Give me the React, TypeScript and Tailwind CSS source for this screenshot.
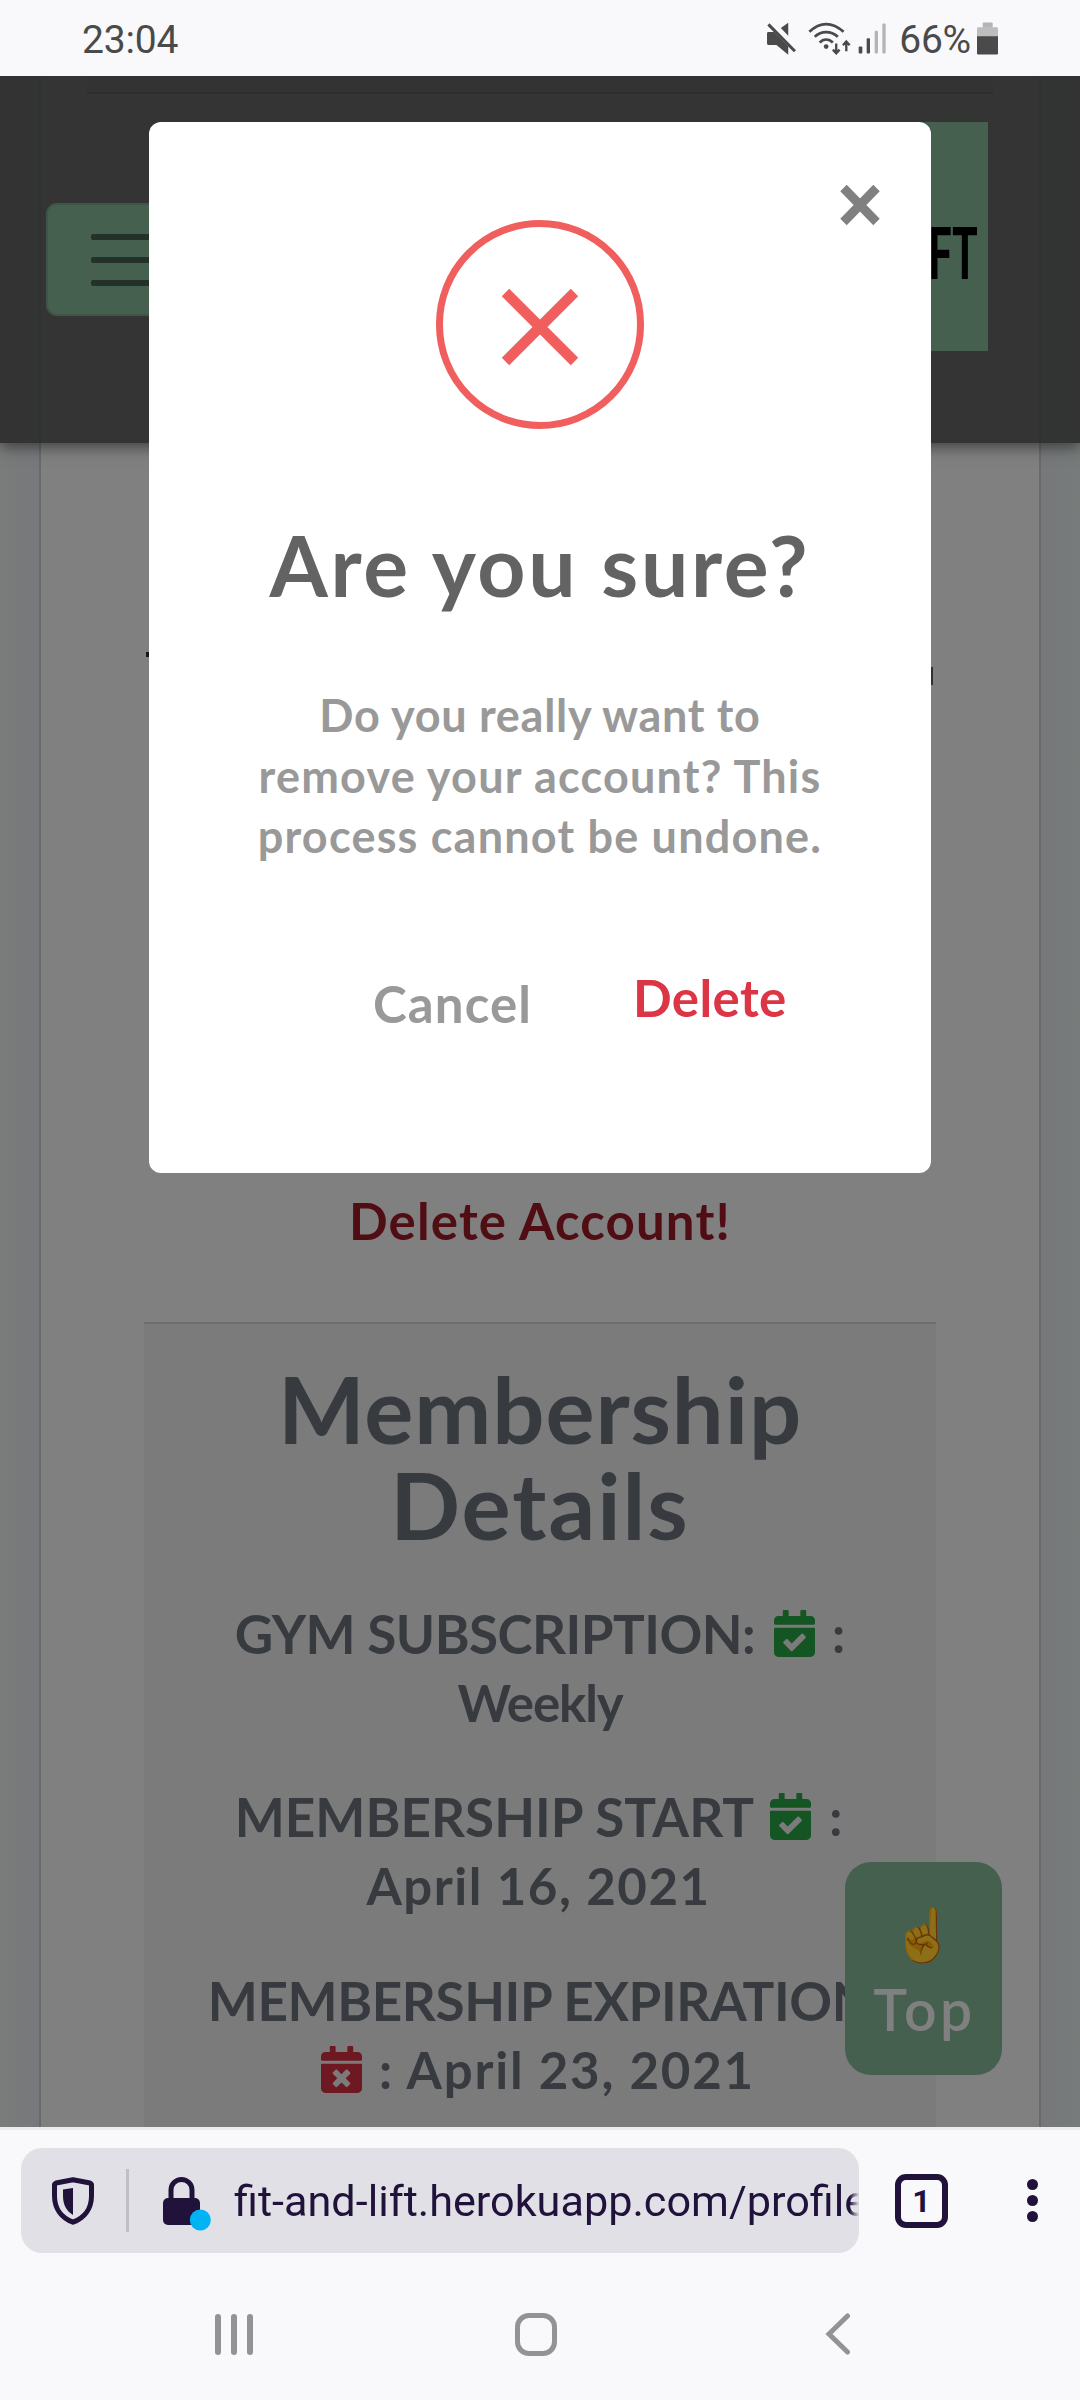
import React from 'react';
import { FaCalendarCheck, FaCalendarTimes } from 'react-icons/fa';

function StatusBar() {
  return (
    <header className="flex h-[76px] shrink-0 items-center justify-between bg-[#f9f9fb] px-[82px] font-['Roboto',sans-serif] text-[39px] leading-[76px] text-[#4a4a4a]">
      <span className="pt-1 tracking-[-0.2px]">23:04</span>
      <div className="flex items-center">
        <svg className="mr-3 h-[33px] w-[29px]" viewBox="20 36 86 98" fill="#4a4a4a">
          <path d="M20 70q0-4 4-4h17l42 42v25L48 104H24q-4 0-4-4zM61 54l22-16v39z" />
          <path d="M24 43l79 80" stroke="#4a4a4a" strokeWidth="9" />
        </svg>
        <svg className="mr-[7px] h-[33px] w-[43px]" viewBox="142 36 128 98" fill="none" stroke="#4a4a4a">
          <path d="M146 65Q170 42 196 42t52 23M162 80Q177 66 196 66t35 14M177 97Q185 88 196 88t20 9" strokeWidth="8" />
          <circle cx="196" cy="109" r="7" fill="#4a4a4a" stroke="none" />
          <path d="M226 100v28M216 118l10 11 10-11M256 123V94M246 105l10-11 10 11" strokeWidth="7" />
        </svg>
        <svg className="mr-[13px] h-[31px] w-[28px]" viewBox="292 42 84 92">
          <rect x="294" y="112" width="11" height="21" rx="3" fill="#4a4a4a" />
          <rect x="318" y="87" width="10" height="46" rx="3" fill="#4a4a4a" />
          <rect x="342" y="65" width="10" height="68" rx="3" fill="#b4b4b4" />
          <rect x="365" y="43" width="10" height="90" rx="3" fill="#b4b4b4" />
        </svg>
        <span className="pt-1 tracking-[-0.2px]">66%</span>
        <svg className="ml-1.5 h-[33px] w-[21px]" viewBox="651 36 63 98">
          <rect x="668" y="37" width="30" height="16" rx="3" fill="#b4b4b4" />
          <rect x="651" y="51" width="63" height="40" rx="4" fill="#bdbdbd" />
          <path d="M651 78h63v51q0 4-4 4h-55q-4 0-4-4z" fill="#4a4a4a" />
        </svg>
      </div>
    </header>
  );
}

function SiteNav() {
  return (
    <nav className="relative z-10 flex h-[367px] items-start justify-between bg-[#2b2b2b]/90 pr-[92px] pl-[46px] shadow-[0_4px_14px_rgba(0,0,0,0.5)]">
      <button className="mt-[127px] flex h-[113px] w-[188px] flex-col items-center justify-center gap-[17px] rounded-[11px] border-2 border-[#3e5648] bg-[#466050]">
        <span className="h-1.5 w-[98px] rounded-xs bg-[#24302a]" />
        <span className="h-1.5 w-[98px] rounded-xs bg-[#24302a]" />
        <span className="h-1.5 w-[98px] rounded-xs bg-[#24302a]" />
      </button>
      <div className="mt-[46px] flex h-[229px] w-[229px] items-center justify-end bg-[#466050] pr-2.5">
        <span className="origin-right scale-x-[0.57] pt-[35px] font-['Roboto',sans-serif] text-[73px] leading-none font-bold text-black">
          LIFT
        </span>
      </div>
    </nav>
  );
}

function MembershipDetails() {
  return (
    <section className="mx-[103px] mt-[71px] h-[820px] border-t-2 border-[#6d6d6d] bg-[#7b7b7b] pt-[37px] text-center text-[51px] leading-[69px] font-bold text-[#373b40]">
      <h2 className="text-[92px] leading-[96px] font-bold">
        <span className="block tracking-[0.9px]">Membership</span>
        <span className="block tracking-[2px]">Details</span>
      </h2>
      <div className="mt-[45.5px]">
        <div className="flex items-center justify-center">
          <span className="text-[53px] tracking-[-0.55px]">GYM SUBSCRIPTION:</span>
          <FaCalendarCheck className="mr-[17px] ml-[19px] h-[47px] w-[41px] text-[#145523]" />
          <span>:</span>
        </div>
        <div className="tracking-[-1.1px]">Weekly</div>
      </div>
      <div className="mt-[45.5px]">
        <div className="flex items-center justify-center pr-[3px]">
          <span className="text-[53px] tracking-[0.05px]">MEMBERSHIP START</span>
          <FaCalendarCheck className="mr-[18px] ml-[16px] h-[47px] w-[41px] text-[#145523]" />
          <span>:</span>
        </div>
        <div className="pr-[3px] tracking-[1.5px]">April 16, 2021</div>
      </div>
      <div className="mt-[45.5px]">
        <div className="text-[53px] tracking-[-0.4px]">MEMBERSHIP EXPIRATION</div>
        <div className="flex items-center justify-center pr-1">
          <FaCalendarTimes className="mr-[17px] h-[47px] w-[41px] text-[#6e1922]" />
          <span className="tracking-[1.8px] whitespace-pre">: April 23, 2021</span>
        </div>
      </div>
    </section>
  );
}

function Modal() {
  return (
    <div className="absolute top-[46px] left-[149px] z-30 flex h-[1051px] w-[782px] flex-col items-center rounded-xl bg-white pt-[98px]">
      <button className="absolute top-[62px] right-[50px]">
        <svg className="size-[42px]" viewBox="0 0 42 42">
          <path d="M4.5 4l33 34M37.5 4l-33 34" stroke="#808080" strokeWidth="9" />
        </svg>
      </button>
      <div className="flex h-[209px] w-[208px] items-center justify-center rounded-full border-[7px] border-[#f15e5e]">
        <svg className="mt-1 h-[78px] w-[78px]" viewBox="0 0 78 78">
          <path d="M4.5 4.5l69 69M73.5 4.5l-69 69" stroke="#f15e5e" strokeWidth="10.5" />
        </svg>
      </div>
      <h1 className="mt-[86px] text-[84px] leading-[100px] font-bold tracking-[2.65px] text-[#636363]">Are you sure?</h1>
      <p className="mt-[70px] text-center text-[45px] leading-[60.5px] font-bold tracking-[1.2px] text-[#999999]">
        <span className="block tracking-[0.7px]">Do you really want to</span>
        <span className="block">remove your account? This</span>
        <span className="block">process cannot be undone.</span>
      </p>
      <div className="mt-[101px] flex w-full items-start pl-[224px] text-[51px] leading-[60px] font-bold">
        <button className="mt-1.5 w-[260px] text-left tracking-[1.1px] text-[#999999]">Cancel</button>
        <button className="tracking-[0.4px] text-[#dc3545]">Delete</button>
      </div>
    </div>
  );
}

function BrowserBar() {
  return (
    <div className="flex h-[144px] items-center border-t-[3px] border-[#ececef] px-[21px]">
      <div className="flex h-[105px] w-[838px] items-center overflow-hidden rounded-[21px] bg-[#e1e0e6] pl-[31px]">
        <svg className="h-[48px] w-[42px] shrink-0" viewBox="0 0 42 48" fill="none">
          <path d="M21 2.8l17 3.2q1.5.5 1.5 2v11c0 13-7.5 22-18.5 26.200C10 41 2.5 32 2.5 19V8q0-1.5 1.5-2z" stroke="#20123a" strokeWidth="5" strokeLinejoin="round" />
          <path d="M21 11v27C14 34 11 27 11 19v-6.5z" fill="#20123a" />
        </svg>
        <span className="ml-8 h-[63px] w-[3px] shrink-0 bg-[#bfbfc9]" />
        <svg className="mt-1.5 ml-[34px] h-[54px] w-[48px] shrink-0" viewBox="0 0 48 54" fill="none">
          <path d="M8 24V13a10.5 10.5 0 0 1 21 0v11" stroke="#20123a" strokeWidth="5" />
          <rect x="0" y="21" width="37" height="27" rx="5" fill="#20123a" />
          <circle cx="37.3" cy="43" r="10.5" fill="#00b3f4" />
        </svg>
        <span className="mt-[3px] ml-[23px] w-[625px] shrink-0 overflow-hidden bg-gradient-to-r from-[#20123a] from-[98.5%] to-[#20123a]/0 bg-clip-text font-['Roboto',sans-serif] text-[43.2px] leading-[60px] whitespace-nowrap text-transparent">
          fit-and-lift.herokuapp.com/profile
        </span>
      </div>
      <div className="ml-9 flex h-[54px] w-[53px] items-center justify-center rounded-[11px] border-[6px] border-[#20123a] font-['Roboto',sans-serif] text-[32px] leading-none font-bold text-[#20123a]">
        1
      </div>
      <div className="ml-[79px] flex flex-col gap-[5px]">
        <span className="size-[11px] rounded-full bg-[#20123a]" />
        <span className="size-[11px] rounded-full bg-[#20123a]" />
        <span className="size-[11px] rounded-full bg-[#20123a]" />
      </div>
    </div>
  );
}

function SystemNav() {
  return (
    <div className="flex h-[126px] items-center pl-[215px]">
      <div className="flex gap-[10px]">
        <span className="h-[41px] w-1.5 rounded-full bg-[#939393]" />
        <span className="h-[41px] w-1.5 rounded-full bg-[#939393]" />
        <span className="h-[41px] w-1.5 rounded-full bg-[#939393]" />
      </div>
      <span className="ml-[262px] h-[43px] w-[42px] rounded-[14px] border-[5px] border-[#939393]" />
      <svg className="ml-[268px] h-[42px] w-[26px]" viewBox="0 0 26 42" fill="none">
        <path d="M22.5 3L4 21l18.5 18" stroke="#939393" strokeWidth="5" strokeLinecap="round" />
      </svg>
    </div>
  );
}

export default function App() {
  return (
    <div className="flex h-[2400px] w-[1080px] flex-col overflow-hidden bg-[#f9f9fb] font-['Lato',sans-serif]">
      <StatusBar />
      <main className="relative h-[2051px] shrink-0 overflow-hidden bg-[linear-gradient(90deg,#7a7c7a_0,#76787b_39px,#76787b_1041px,#777b7a_1080px)]">
        <SiteNav />
        <div className="mx-[39px] -mt-[367px] h-[2051px] border-x-2 border-[#6a6a6b] bg-[#808080]">
          <div className="mx-[46px] h-[18px] border-b-2 border-[#484848] bg-[#787878]" />
          <div className="mx-[105px] mt-[558px] flex h-[33px] justify-between">
            <span className="h-[5px] w-1 bg-[#151515]" />
            <span className="mt-[15px] mr-px h-[18px] w-0.5 bg-[#303030]" />
          </div>
          <div className="mt-[506px] text-center text-[51px] leading-[60px] font-bold tracking-[1.15px] text-[#500d14]">
            Delete Account!
          </div>
          <MembershipDetails />
        </div>
        <button className="absolute top-[1786px] left-[845px] z-20 flex h-[213px] w-[157px] flex-col items-center rounded-[26px] bg-[#466050] pt-[39px] text-[#808080]">
          <span className="text-[52px] leading-[64px] brightness-[0.55]">☝️</span>
          <span className="mt-2.5 pl-0.5 text-[57px] leading-[68px] font-semibold tracking-[3.5px]">Top</span>
        </button>
        <Modal />
      </main>
      <footer className="flex flex-col">
        <BrowserBar />
        <SystemNav />
      </footer>
    </div>
  );
}
